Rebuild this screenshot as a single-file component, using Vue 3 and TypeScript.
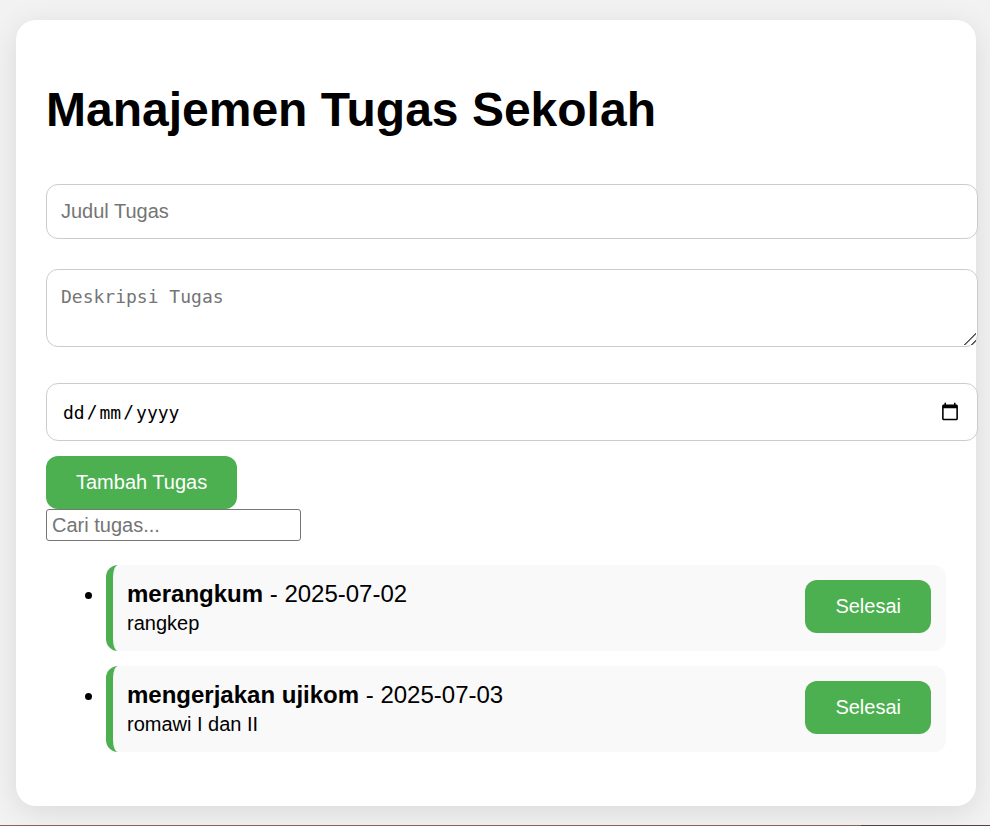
<script setup lang="ts">
import { computed, ref } from 'vue'

interface Task {
  id: number
  title: string
  description: string
  date: string
}

const tasks = ref<Task[]>([
  { id: 1, title: 'merangkum', description: 'rangkep', date: '2025-07-02' },
  { id: 2, title: 'mengerjakan ujikom', description: 'romawi I dan II', date: '2025-07-03' },
])

const title = ref('')
const description = ref('')
const date = ref('')
const query = ref('')

const visibleTasks = computed(() =>
  tasks.value.filter((task) => task.title.toLowerCase().includes(query.value.toLowerCase())),
)

function addTask(): void {
  if (!title.value || !date.value) return
  tasks.value.push({
    id: Date.now(),
    title: title.value,
    description: description.value,
    date: date.value,
  })
  title.value = ''
  description.value = ''
  date.value = ''
}

function finishTask(id: number): void {
  tasks.value = tasks.value.filter((task) => task.id !== id)
}
</script>

<template>
  <div class="page">
    <main class="card">
      <h1>Manajemen Tugas Sekolah</h1>
      <form class="task-form" @submit.prevent="addTask">
        <input v-model="title" class="field" type="text" placeholder="Judul Tugas" aria-label="Judul Tugas" />
        <textarea
          v-model="description"
          class="field description"
          rows="2"
          placeholder="Deskripsi Tugas"
          aria-label="Deskripsi Tugas"
        ></textarea>
        <input v-model="date" class="field date" type="date" lang="id" aria-label="Tanggal" />
        <button class="action" type="submit">Tambah Tugas</button>
      </form>
      <input v-model="query" class="search" type="text" placeholder="Cari tugas..." aria-label="Cari tugas" />
      <ul class="tasks">
        <li v-for="task in visibleTasks" :key="task.id" class="task">
          <button class="action finish" type="button" @click="finishTask(task.id)">Selesai</button>
          <strong>{{ task.title }}</strong> - {{ task.date }}
          <small>{{ task.description }}</small>
        </li>
      </ul>
    </main>
    <div class="edge"><div class="edge-fill"></div></div>
  </div>
</template>

<style>
body {
  background: #f2f2f2;
}
</style>

<style scoped>
.page {
  display: flow-root;
  font-family: "Liberation Sans", Arial, sans-serif;
  font-size: 24px;
  line-height: 28px;
  color: #000;
}

.card {
  margin: 20px 14px 19px 16px;
  padding: 30px;
  border-radius: 20px;
  background: #fff;
  box-shadow: 0 6px 30px rgba(0, 0, 0, 0.1);
}

h1 {
  margin: 32px 0;
  font-size: 48px;
  line-height: 55px;
}

.task-form {
  display: flex;
  flex-direction: column;
  align-items: flex-start;
}

.field {
  box-sizing: content-box;
  width: 100%;
  height: 23px;
  margin: 15px 0;
  padding: 15px 16px 15px 14px;
  border: 1px solid #ccc;
  border-radius: 12px;
  background: #fff;
  font-family: inherit;
  font-size: 20px;
  line-height: 23px;
  color: #000;
}

.field::placeholder,
.search::placeholder {
  color: #757575;
}

.description {
  height: 46px;
  margin-bottom: 21px;
  font-family: "DejaVu Sans Mono", monospace;
  font-size: 18px;
}

.description::-webkit-resizer {
  background: linear-gradient(
      135deg,
      transparent 8px,
      #555 8px,
      #555 9px,
      transparent 10px,
      transparent 13px,
      #555 13px,
      #555 14px,
      transparent 15px
    )
    2px 2px / 12px 12px no-repeat;
}

.date {
  height: 26px;
  margin-bottom: 15px;
  padding-left: 15px;
  padding-right: 15px;
  font-family: "DejaVu Sans Mono", monospace;
  font-size: 18px;
}

/* Day, month, year order; the separators fill the free columns. */
.date::-webkit-datetime-edit-fields-wrapper {
  display: inline-grid;
  grid-template-columns: repeat(5, auto);
  justify-content: start;
}

.date::-webkit-datetime-edit-day-field {
  grid-area: 1 / 1;
}

.date::-webkit-datetime-edit-text {
  grid-row: 1;
  padding: 0 1px;
}

.date::-webkit-datetime-edit-month-field {
  grid-area: 1 / 3;
}

.date::-webkit-datetime-edit-year-field {
  grid-area: 1 / 5;
}

.date::-webkit-calendar-picker-indicator {
  width: 20px;
  height: 20px;
}

.action {
  padding: 15px 30px;
  border: 0;
  border-radius: 12px;
  background: #4caf50;
  font-family: inherit;
  font-size: 20px;
  line-height: 23px;
  color: #fff;
  cursor: pointer;
}

.search {
  display: block;
  box-sizing: border-box;
  width: 255px;
  height: 32px;
  padding: 0 5px;
  border: 1px solid #767676;
  border-radius: 3px;
  background: #fff;
  font-family: inherit;
  font-size: 20px;
  color: #000;
}

.tasks {
  margin: 24px 0;
  padding: 0 0 0 60px;
}

.task {
  margin: 15px 0;
  padding: 15px 15px 13px 14px;
  border-left: 7px solid #4caf50;
  border-radius: 12px;
  background: #f9f9f9;
}

.finish {
  float: right;
}

small {
  display: block;
  font-size: 20px;
  line-height: 30px;
}

.edge {
  height: 1px;
  background: #54423f;
}

.edge-fill {
  width: 87%;
  height: 1px;
  background: #8b6055;
}
</style>
